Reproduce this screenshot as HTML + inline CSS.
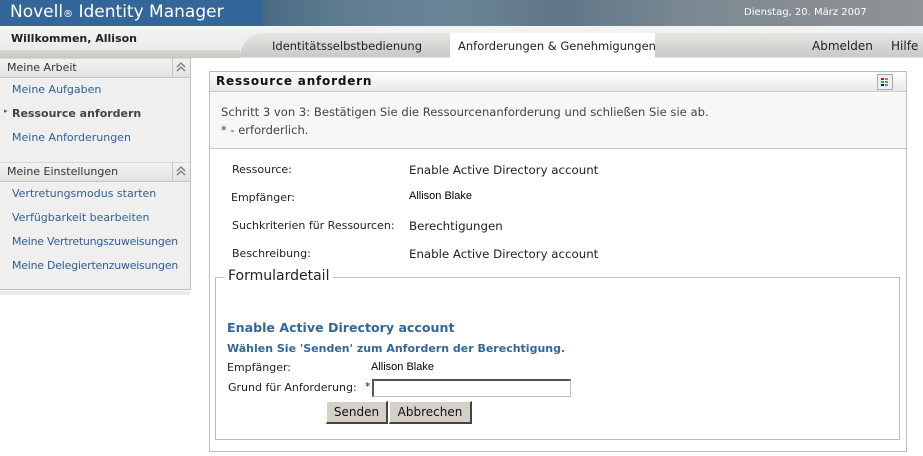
<!DOCTYPE html>
<html><head><meta charset="utf-8"><style>
*{margin:0;padding:0;box-sizing:border-box}
body{width:923px;height:456px;overflow:hidden;background:#fff;font-family:"DejaVu Sans","Liberation Sans",sans-serif;font-size:11px;color:#333;position:relative}
.a{position:absolute;white-space:nowrap}
.hdr{left:0;top:0;width:923px;height:26px;background:linear-gradient(90deg,#336699 0,#336699 262px,#4a6a84 264px,#5d7b8e 330px,#6b8597 450px,#5f7688 560px,#7d8a93 700px,#8a8f93 850px,#909396 923px)}
.ttl{left:10px;top:2px;color:#fff;font-size:17px;font-family:"DejaVu Sans",sans-serif}
.nav{left:0;top:26px;width:923px;height:32px;background:linear-gradient(#f4f4f4,#e8e8e8)}
.tabs{left:240px;top:33px;width:683px;height:24px;background:linear-gradient(#e6e6e4,#c9c9c5);border-radius:30px 0 0 0}
.side{left:0;top:58px;width:191px;height:232px;background:#efefef;border-right:1px solid #c0c0c0;border-bottom:1px solid #c0c0c0}
.sh{left:0;width:190px;height:20px;background:linear-gradient(#f2f2f2,#e2e2e2);border-bottom:1px solid #c4c4c4;border-top:1px solid #d8d8d8}
.lnk{color:#2f5f99;font-size:11px}
.panel{left:209px;top:71px;width:698px;height:381px;border:1px solid #bdbdbd}
.blue{color:#336699;font-weight:bold}
</style></head><body>
<div class="a hdr"></div>
<div class="a ttl">Novell<span style="font-size:10px">®</span> Identity Manager</div>
<div class="a" style="left:744px;top:7px;color:#fff;font-size:10px">Dienstag, 20. März 2007</div>
<div class="a nav"></div>
<div class="a tabs"></div>
<div class="a" style="left:0;top:50px;width:240px;height:8px;background:linear-gradient(#d6d6d2,#c8c8c4)"></div>
<div class="a" style="left:450px;top:33px;width:205px;height:25px;background:#fff"></div>
<div class="a" style="left:11px;top:32px;font-weight:bold;font-size:11px;color:#222">Willkommen, Allison</div>
<div class="a" style="left:272px;top:39px;font-size:11.5px;color:#222">Identitätsselbstbedienung</div>
<div class="a" style="left:458px;top:39px;font-size:11.5px;color:#222">Anforderungen &amp; Genehmigungen</div>
<div class="a" style="left:812px;top:39px;font-size:12px;color:#222">Abmelden</div>
<div class="a" style="left:891px;top:39px;font-size:12px;color:#222">Hilfe</div>

<div class="a side"></div>
<div class="a sh" style="top:58px"></div>
<div class="a" style="left:172px;top:58px;width:1px;height:19px;background:#c4c4c4"></div>
<svg class="a" style="left:175px;top:61px" width="12" height="12"><path d="M2 6l4-4 4 4M2 10l4-4 4 4" stroke="#777" stroke-width="1.3" fill="none"/></svg>
<div class="a" style="left:7px;top:61px;font-size:11px;color:#333">Meine Arbeit</div>
<div class="a lnk" style="left:12px;top:83px">Meine Aufgaben</div>
<div class="a" style="left:4px;top:107px;font-size:7px;color:#555">▸</div>
<div class="a" style="left:12px;top:107px;font-weight:bold;font-size:11px;color:#444">Ressource anfordern</div>
<div class="a lnk" style="left:12px;top:131px">Meine Anforderungen</div>
<div class="a sh" style="top:162px"></div>
<div class="a" style="left:172px;top:162px;width:1px;height:19px;background:#c4c4c4"></div>
<svg class="a" style="left:175px;top:165px" width="12" height="12"><path d="M2 6l4-4 4 4M2 10l4-4 4 4" stroke="#777" stroke-width="1.3" fill="none"/></svg>
<div class="a" style="left:7px;top:165px;font-size:11px;color:#333">Meine Einstellungen</div>
<div class="a lnk" style="left:12px;top:187px">Vertretungsmodus starten</div>
<div class="a lnk" style="left:12px;top:211px">Verfügbarkeit bearbeiten</div>
<div class="a lnk" style="left:12px;top:235px;letter-spacing:-0.25px">Meine Vertretungszuweisungen</div>
<div class="a lnk" style="left:12px;top:259px;letter-spacing:-0.25px">Meine Delegiertenzuweisungen</div>
<div class="a" style="left:0;top:291px;width:190px;height:4px;background:#ececec"></div>

<div class="a panel"></div>
<div class="a" style="left:210px;top:72px;width:696px;height:20px;background:linear-gradient(#fff,#e8e8e8);border-bottom:1px solid #c8c8c8"></div>
<div class="a" style="left:216px;top:74px;font-weight:bold;font-size:12px;color:#111;letter-spacing:0.8px">Ressource anfordern</div>
<div class="a" style="left:877px;top:74px;width:16px;height:16px;border:1px solid #aaa;background:#f0f0f0"></div>
<svg class="a" style="left:880px;top:77px" width="10" height="10"><rect x="1" y="1" width="3" height="2" fill="#e00"/><rect x="1" y="4" width="3" height="2" fill="#0c0"/><rect x="1" y="7" width="3" height="2" fill="#00e"/><rect x="5" y="1" width="3" height="2" fill="#888"/><rect x="5" y="4" width="3" height="2" fill="#888"/><rect x="5" y="7" width="3" height="2" fill="#888"/></svg>
<div class="a" style="left:210px;top:93px;width:696px;height:56px;background:#f7f7f5;border-bottom:1px solid #c8c8c8"></div>
<div class="a" style="left:221px;top:105px;font-size:11.6px;color:#444">Schritt 3 von 3: Bestätigen Sie die Ressourcenanforderung und schließen Sie sie ab.</div>
<div class="a" style="left:221px;top:123px;font-size:11.5px;color:#444">* - erforderlich.</div>
<div class="a" style="left:232px;top:163px;color:#222">Ressource:</div>
<div class="a" style="left:409px;top:163px;font-size:11.8px;color:#222">Enable Active Directory account</div>
<div class="a" style="left:231px;top:191px;color:#222">Empfänger:</div>
<div class="a" style="left:409px;top:190px;font-family:'Liberation Sans',sans-serif;font-size:11px;color:#000">Allison Blake</div>
<div class="a" style="left:232px;top:219px;color:#222">Suchkriterien für Ressourcen:</div>
<div class="a" style="left:409px;top:219px;font-size:11.8px;color:#222">Berechtigungen</div>
<div class="a" style="left:232px;top:247px;color:#222">Beschreibung:</div>
<div class="a" style="left:409px;top:247px;font-size:11.8px;color:#222">Enable Active Directory account</div>

<div class="a" style="left:215px;top:277px;width:685px;height:163px;border:1px solid #bdbdbd"></div>
<div class="a" style="left:224px;top:268px;padding:0 4px;background:#fff;font-size:14px;color:#222">Formulardetail</div>
<div class="a blue" style="left:227px;top:320px;font-size:12.6px">Enable Active Directory account</div>
<div class="a blue" style="left:227px;top:342px;font-size:11px">Wählen Sie 'Senden' zum Anfordern der Berechtigung.</div>
<div class="a" style="left:227px;top:361px;color:#222">Empfänger:</div>
<div class="a" style="left:371px;top:361px;font-family:'Liberation Sans',sans-serif;font-size:11px;color:#000">Allison Blake</div>
<div class="a" style="left:228px;top:381px;color:#222">Grund für Anforderung:</div>
<div class="a" style="left:365px;top:380px;color:#222">*</div>
<div class="a" style="left:372px;top:379px;width:199px;height:18px;border:1px solid #bbb;border-top:2px solid #555;border-left:2px solid #555;background:#fff"></div>
<div class="a" style="left:326px;top:401px;width:62px;height:23px;background:#d4d0c8;border:1px solid #fff;border-right:2px solid #444;border-bottom:2px solid #444;text-align:center;line-height:20px;font-size:12px;color:#111">Senden</div>
<div class="a" style="left:389px;top:401px;width:83px;height:23px;background:#d4d0c8;border:1px solid #fff;border-right:2px solid #444;border-bottom:2px solid #444;text-align:center;line-height:20px;font-size:12px;color:#111">Abbrechen</div>
</body></html>
